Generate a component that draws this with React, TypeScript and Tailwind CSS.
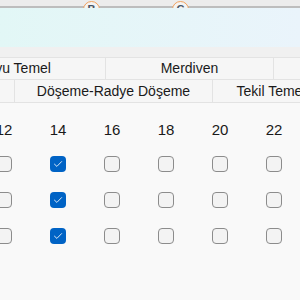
import React from 'react';

const sizes = [12, 14, 16, 18, 20, 22];
const rows = [
  [false, true, false, false, false, false],
  [false, true, false, false, false, false],
  [false, true, false, false, false, false],
];

const Box: React.FC<{ on: boolean }> = ({ on }) =>
  on ? (
    <div className="w-4 h-4 rounded-[4px] bg-[#0063c5] flex items-center justify-center">
      <svg width="10" height="8" viewBox="0 0 10 8" fill="none">
        <path d="M1.5 4.2 L3.9 6.4 L8.6 1.6" stroke="#dbe9f8" strokeWidth="1" strokeLinecap="round" strokeLinejoin="round" />
      </svg>
    </div>
  ) : (
    <div className="w-4 h-4 rounded-[4px] border border-[#8c8c8c] bg-[#f3f3f3]"></div>
  );

const Badge: React.FC<{ letter: string; left: string }> = ({ letter, left }) => (
  <div className={`absolute top-[1px] ${left} w-[17px] h-[17px] rounded-full border-[1.5px] border-[#f2a35e] bg-[#f4f4f4] flex items-start justify-center`}>
    <span className="text-[11px] leading-none mt-[2px] font-bold text-[#4a5563]">{letter}</span>
  </div>
);

export default function App() {
  return (
    <div className="w-[300px] h-[300px] overflow-hidden bg-[#f9f9f9] text-[#1a1a1a]" style={{ fontFamily: '"Liberation Sans", Arial, sans-serif' }}>
      <div className="relative h-[8px] bg-[#ececec] border-b-2 border-[#bdbdbd]">
        <Badge letter="B" left="left-[83px]" />
        <Badge letter="C" left="left-[172px]" />
      </div>
      <div className="relative z-10 h-[39px] bg-gradient-to-r from-[#e2f7f6] to-[#eaf4fb]"></div>
      <div className="h-[11px] bg-[#f0f0f0] border-b border-[#e3e3e3]"></div>

      <div className="flex h-[22px] border-b border-[#e3e3e3] bg-[#f6f6f6] text-[14px] whitespace-nowrap">
        <div className="shrink-0 ml-[-76px] w-[182px] border-r border-[#e3e3e3] flex items-center justify-center">Kuyu Temel</div>
        <div className="shrink-0 w-[168px] border-r border-[#e3e3e3] flex items-center justify-center">Merdiven</div>
        <div className="shrink-0 w-[120px] flex items-center justify-center"></div>
      </div>
      <div className="flex h-[23px] border-b border-[#e3e3e3] bg-[#f6f6f6] text-[14px] whitespace-nowrap">
        <div className="shrink-0 w-[15px] border-r border-[#e3e3e3]"></div>
        <div className="shrink-0 w-[198px] border-r border-[#e3e3e3] flex items-center justify-center">Döşeme-Radye Döşeme</div>
        <div className="shrink-0 w-[116px] flex items-center justify-center">Tekil Temel</div>
      </div>

      <div className="ml-[-23px] mt-[17px]">
        <div className="flex h-[20px] items-center text-[15px]">
          {sizes.map((s) => (
            <div key={s} className="w-[54px] shrink-0 text-center">{s}</div>
          ))}
        </div>
        <div className="mt-[6px]">
          {rows.map((r, i) => (
            <div key={i} className="flex h-[36px] items-center">
              {r.map((on, j) => (
                <div key={j} className="w-[54px] shrink-0 flex justify-center">
                  <Box on={on} />
                </div>
              ))}
            </div>
          ))}
        </div>
      </div>
    </div>
  );
}
